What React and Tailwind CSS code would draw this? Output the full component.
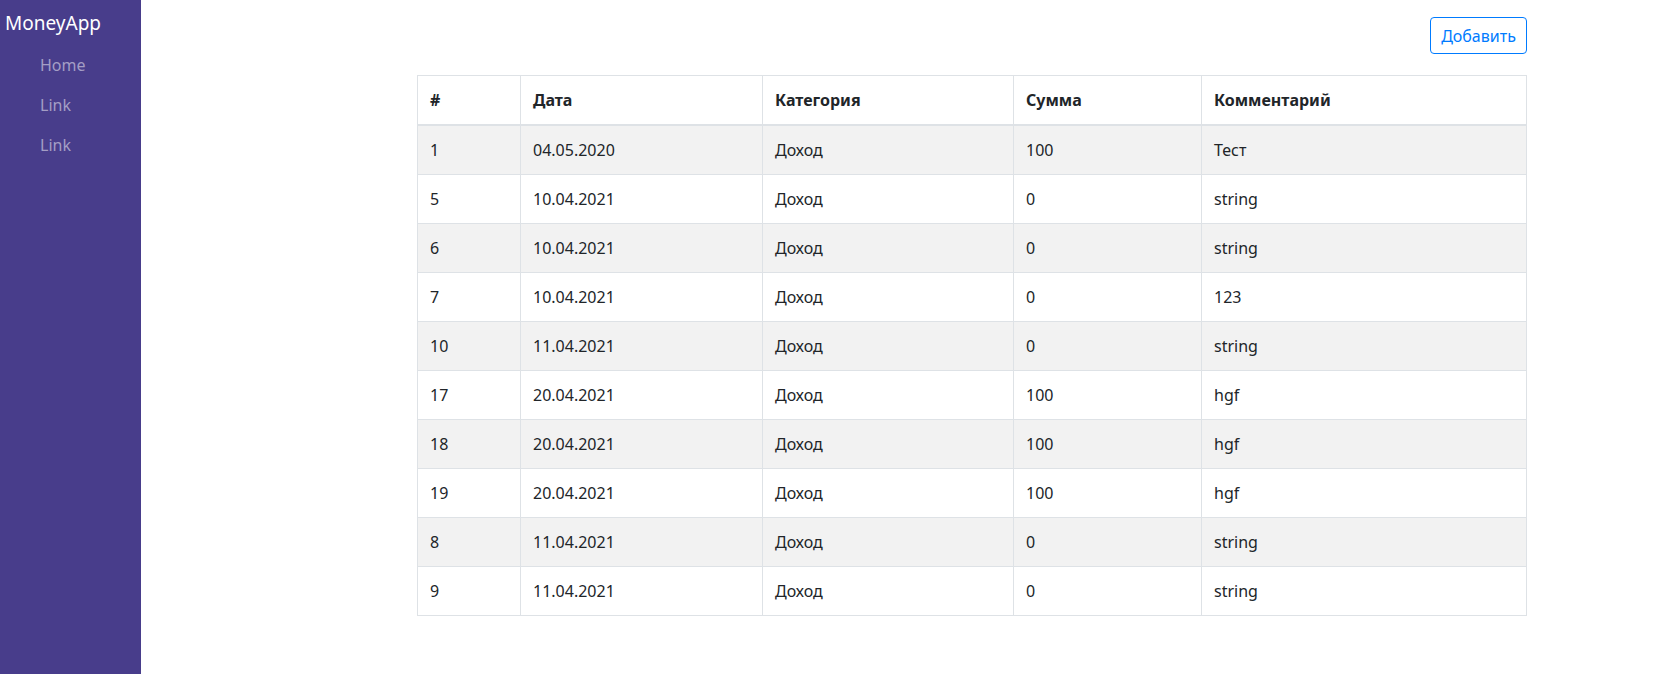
import React from 'react';

const rows = [
  { id: 1, date: '04.05.2020', cat: 'Доход', sum: 100, comment: 'Тест' },
  { id: 5, date: '10.04.2021', cat: 'Доход', sum: 0, comment: 'string' },
  { id: 6, date: '10.04.2021', cat: 'Доход', sum: 0, comment: 'string' },
  { id: 7, date: '10.04.2021', cat: 'Доход', sum: 0, comment: '123' },
  { id: 10, date: '11.04.2021', cat: 'Доход', sum: 0, comment: 'string' },
  { id: 17, date: '20.04.2021', cat: 'Доход', sum: 100, comment: 'hgf' },
  { id: 18, date: '20.04.2021', cat: 'Доход', sum: 100, comment: 'hgf' },
  { id: 19, date: '20.04.2021', cat: 'Доход', sum: 100, comment: 'hgf' },
  { id: 8, date: '11.04.2021', cat: 'Доход', sum: 0, comment: 'string' },
  { id: 9, date: '11.04.2021', cat: 'Доход', sum: 0, comment: 'string' },
];

const cell = 'border border-[#dee2e6] px-3 py-3 leading-6';

export default function App() {
  return (
    <div
      className="flex min-h-screen bg-white text-[16px] text-[#212529]"
      style={{ fontFamily: '"Segoe UI", "Noto Sans", "Open Sans", sans-serif' }}
    >
      {/* SIDEBAR */}
      <aside className="w-[141px] shrink-0 bg-[#483d8b] min-h-screen">
        <div className="pl-[5px] pt-[8px] text-[19px] leading-[30px] text-white">MoneyApp</div>
        <ul className="mt-[7px] pl-6">
          <li className="px-4 py-2 leading-6 text-[#a49ec5]">Home</li>
          <li className="px-4 py-2 leading-6 text-[#a49ec5]">Link</li>
          <li className="px-4 py-2 leading-6 text-[#a49ec5]">Link</li>
        </ul>
      </aside>

      {/* CONTENT */}
      <main className="flex-1 pl-[276px] pt-[17px]">
        <div className="w-[1110px]">
          <div className="flex justify-end">
            <button className="h-[37px] w-[97px] rounded border border-[#007bff] text-[#007bff] leading-6">
              Добавить
            </button>
          </div>
          <table className="mt-[21px] w-[1110px] border-collapse text-left">
            <thead>
              <tr>
                <th className={cell + ' w-[103px] border-b-2 font-bold'}>#</th>
                <th className={cell + ' w-[242px] border-b-2 font-bold'}>Дата</th>
                <th className={cell + ' w-[251px] border-b-2 font-bold'}>Категория</th>
                <th className={cell + ' w-[188px] border-b-2 font-bold'}>Сумма</th>
                <th className={cell + ' border-b-2 font-bold'}>Комментарий</th>
              </tr>
            </thead>
            <tbody>
              {rows.map((r, i) => (
                <tr key={r.id} className={i % 2 === 0 ? 'bg-[#f2f2f2]' : 'bg-white'}>
                  <td className={cell}>{r.id}</td>
                  <td className={cell}>{r.date}</td>
                  <td className={cell}>{r.cat}</td>
                  <td className={cell}>{r.sum}</td>
                  <td className={cell}>{r.comment}</td>
                </tr>
              ))}
            </tbody>
          </table>
        </div>
      </main>
    </div>
  );
}
